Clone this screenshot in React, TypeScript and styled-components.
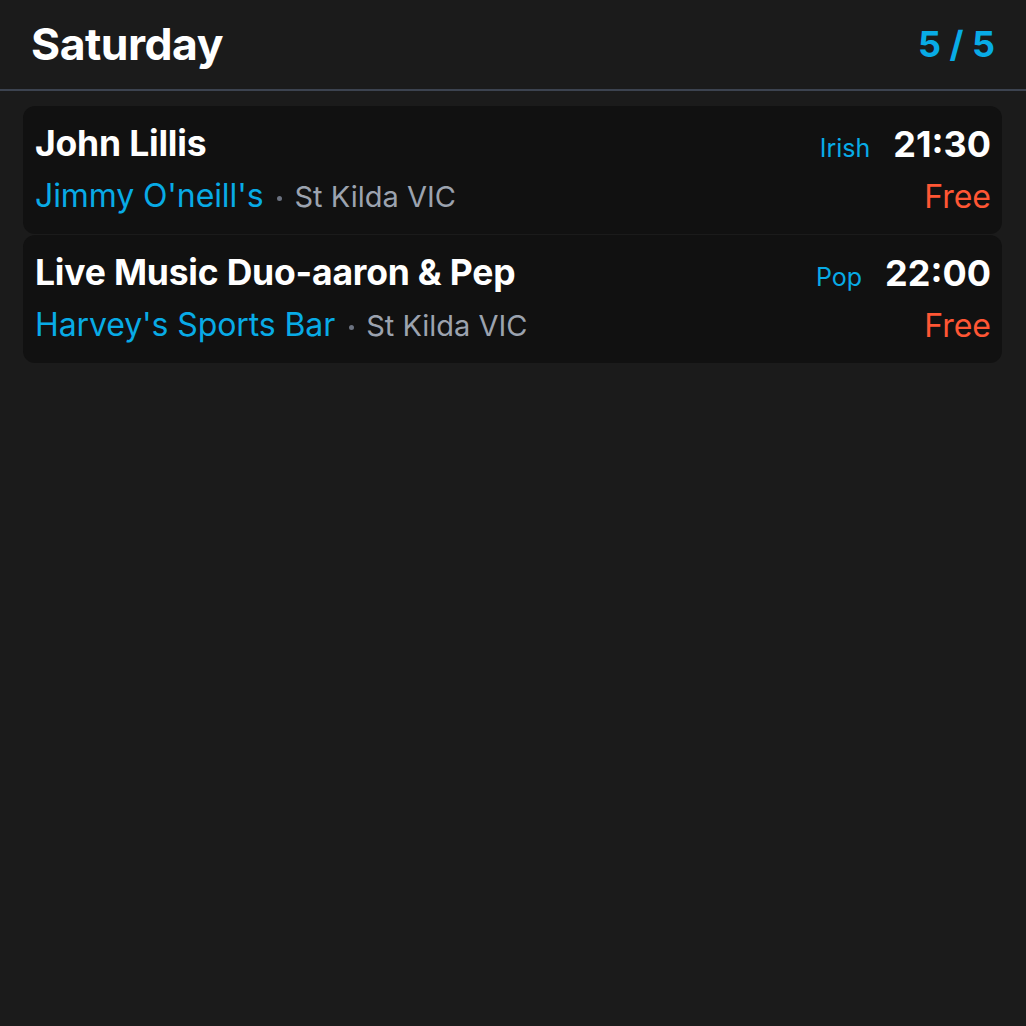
import React from "react";
import styled, { createGlobalStyle } from "styled-components";

const Global = createGlobalStyle`
  html, body { margin: 0; padding: 0; background: #1b1b1b; }
  body { font-family: Inter, "Noto Sans", sans-serif; }
`;

const Page = styled.div`
  min-height: 1026px;
  background: #1b1b1b;
  display: flex;
  flex-direction: column;
`;

const Header = styled.header`
  display: flex;
  align-items: center;
  justify-content: space-between;
  height: 91px;
  padding: 0 31px 2px;
  border-bottom: 2px solid #3c4350;
  box-sizing: border-box;
`;

const Title = styled.h1`
  margin: 0;
  font-size: 44.5px;
  font-weight: 700;
  color: #ffffff;
  letter-spacing: -0.5px;
`;

const Count = styled.span`
  font-size: 36px;
  font-weight: 700;
  color: #08abe6;
`;

const List = styled.div`
  display: flex;
  flex-direction: column;
  gap: 1px;
  padding: 15px 24px 0 23px;
`;

const Card = styled.div`
  background: #111111;
  border-radius: 12px;
  height: 128px;
  box-sizing: border-box;
  padding: 15px 11px 0 12px;
  display: flex;
  justify-content: space-between;
`;

const Left = styled.div`
  display: flex;
  flex-direction: column;
  gap: 9px;
`;

const Name = styled.div`
  font-size: 35.5px;
  font-weight: 700;
  color: #ffffff;
  line-height: 46px;
  letter-spacing: -0.2px;
`;

const VenueRow = styled.div`
  display: flex;
  align-items: baseline;
  line-height: 40px;
`;

const Venue = styled.span`
  font-size: 32px;
  color: #08abe6;
  letter-spacing: -0.1px;
`;

const Dot = styled.span`
  align-self: flex-end;
  width: 5px;
  height: 5px;
  border-radius: 50%;
  background: #6b7280;
  margin: 0 12px 16px 14px;
`;

const Place = styled.span`
  font-size: 29px;
  color: #9ca3af;
`;

const Right = styled.div`
  display: flex;
  flex-direction: column;
  align-items: flex-end;
  gap: 6px;
`;

const TopRight = styled.div`
  display: flex;
  align-items: baseline;
  gap: 23px;
  line-height: 46px;
`;

const Genre = styled.span`
  font-size: 25px;
  color: #08abe6;
`;

const Time = styled.span`
  font-size: 36px;
  font-weight: 700;
  color: #ffffff;
`;

const Price = styled.span`
  font-size: 32px;
  color: #ff5634;
  line-height: 40px;
`;

const gigs = [
  { name: "John Lillis", venue: "Jimmy O'neill's", place: "St Kilda VIC", genre: "Irish", time: "21:30", price: "Free" },
  { name: "Live Music Duo-aaron & Pep", venue: "Harvey's Sports Bar", place: "St Kilda VIC", genre: "Pop", time: "22:00", price: "Free" },
];

export default function App() {
  return (
    <Page>
      <Global />
      <Header>
        <Title>Saturday</Title>
        <Count>5 / 5</Count>
      </Header>
      <List>
        {gigs.map((g) => (
          <Card key={g.name}>
            <Left>
              <Name>{g.name}</Name>
              <VenueRow>
                <Venue>{g.venue}</Venue>
                <Dot />
                <Place>{g.place}</Place>
              </VenueRow>
            </Left>
            <Right>
              <TopRight>
                <Genre>{g.genre}</Genre>
                <Time>{g.time}</Time>
              </TopRight>
              <Price>{g.price}</Price>
            </Right>
          </Card>
        ))}
      </List>
    </Page>
  );
}
